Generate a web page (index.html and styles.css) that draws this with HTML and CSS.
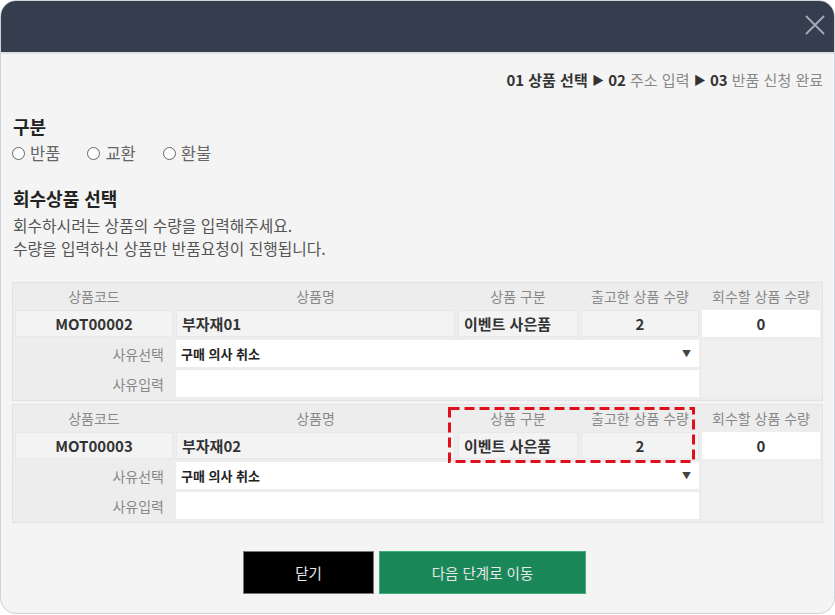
FILE: index.html
```html
<!DOCTYPE html>
<html lang="ko">
<head>
  <meta charset="UTF-8">
  <meta name="viewport" content="width=device-width, initial-scale=1.0">
  <title>반품 신청</title>
  <link rel="stylesheet" href="styles.css">
</head>
<body>
  <div class="modal">
    <div class="modal-head">
      <button class="close-btn" aria-label="닫기">
        <svg width="20" height="20" viewBox="0 0 20 20"><path d="M1 1 L19 19 M19 1 L1 19" stroke="#a3abb8" stroke-width="1.8" fill="none"/></svg>
      </button>
    </div>
    <div class="modal-body">
      <div class="steps">
        <b class="on">01 상품 선택</b> <i>▶</i> <b>02</b> <span>주소 입력</span> <i>▶</i> <b>03</b> <span>반품 신청 완료</span>
      </div>

      <h3 class="section-title">구분</h3>
      <div class="radios">
        <label><input type="radio" name="kind"> 반품</label>
        <label><input type="radio" name="kind"> 교환</label>
        <label><input type="radio" name="kind"> 환불</label>
      </div>

      <h3 class="section-title title-gap">회수상품 선택</h3>
      <p class="desc">회수하시려는 상품의 수량을 입력해주세요.<br>수량을 입력하신 상품만 반품요청이 진행됩니다.</p>

      <div class="item-table">
        <div class="th">상품코드</div>
        <div class="th">상품명</div>
        <div class="th">상품 구분</div>
        <div class="th">출고한 상품 수량</div>
        <div class="th">회수할 상품 수량</div>
        <div class="td center">MOT00002</div>
        <div class="td">부자재01</div>
        <div class="td">이벤트 사은품</div>
        <div class="td center">2</div>
        <div class="td input center">0</div>
        <div class="lbl">사유선택</div>
        <div class="select">구매 의사 취소<span class="arrow">▼</span></div>
        <div class="blank"></div>
        <div class="lbl">사유입력</div>
        <div class="text-input"></div>
      </div>

      <div class="item-table">
        <div class="th">상품코드</div>
        <div class="th">상품명</div>
        <div class="th">상품 구분</div>
        <div class="th">출고한 상품 수량</div>
        <div class="th">회수할 상품 수량</div>
        <div class="td center">MOT00003</div>
        <div class="td">부자재02</div>
        <div class="td">이벤트 사은품</div>
        <div class="td center">2</div>
        <div class="td input center">0</div>
        <div class="lbl">사유선택</div>
        <div class="select">구매 의사 취소<span class="arrow">▼</span></div>
        <div class="blank"></div>
        <div class="lbl">사유입력</div>
        <div class="text-input"></div>
        <svg class="highlight" width="247" height="56" viewBox="0 0 247 56">
          <rect x="1.5" y="1.5" width="244" height="53" fill="none" stroke="#e0101a" stroke-width="3" stroke-dasharray="10 5"/>
        </svg>
      </div>

      <div class="actions">
        <button class="btn btn-close">닫기</button>
        <button class="btn btn-next">다음 단계로 이동</button>
      </div>
    </div>
  </div>
</body>
</html>
```

FILE: styles.css
```css
* { box-sizing: border-box; }
body {
  margin: 0;
  background: #fff;
  font-family: "Noto Sans CJK KR", "Noto Sans", sans-serif;
  color: #333;
}
.modal {
  height: 614px;
  border: 1px solid #cfd2d6;
  border-radius: 16px;
  overflow: hidden;
  background: #f4f4f4;
}
.modal-head {
  height: 53px;
  background: #353e4f;
  border-bottom: 2px solid #dde1e7;
  display: flex;
  justify-content: flex-end;
  align-items: center;
  padding-right: 5px;
}
.close-btn {
  background: none;
  border: none;
  padding: 0;
  width: 28px;
  height: 28px;
  display: flex;
  align-items: center;
  justify-content: center;
  margin-bottom: 4px;
  cursor: pointer;
}
.modal-body {
  padding: 0 11px;
}
.steps {
  margin-top: 16px;
  text-align: right;
  font-size: 15px;
  line-height: 20px;
  color: #888;
}
.steps b { color: #333; font-weight: bold; }
.steps i {
  font-style: normal;
  font-size: 12px;
  color: #333;
  vertical-align: 1px;
}
.section-title {
  margin: 24px 0 0 1px;
  font-size: 18px;
  line-height: 24px;
  font-weight: bold;
  color: #222;
}
.title-gap { margin-top: 22px; }
.radios {
  margin-top: 4px;
  display: flex;
  gap: 27px;
  font-size: 16.5px;
  line-height: 22px;
  color: #666;
}
.radios label {
  display: flex;
  align-items: center;
  gap: 5px;
}
.radios input {
  appearance: none;
  margin: 0;
  width: 13px;
  height: 13px;
  border: 1.5px solid #666;
  border-radius: 50%;
  background: #fff;
}
.desc {
  margin: 4px 0 0 1px;
  font-size: 15.8px;
  line-height: 23px;
  color: #555;
}
.item-table {
  position: relative;
  margin-top: 22px;
  border: 1px solid #e3e3e3;
  background: #ededed;
  display: grid;
  grid-template-columns: 158px 279px 120px 118px 118px;
  grid-template-rows: 23px 27px 27px 27px;
  gap: 3px;
  padding: 1px 2px 3px 2px;
  font-size: 14px;
}
.item-table + .item-table { margin-top: 3px; }
.th {
  display: flex;
  align-items: center;
  justify-content: center;
  color: #888;
}
.td {
  display: flex;
  align-items: center;
  padding: 0 5px;
  background: #f3f3f3;
  border: 1px solid #e8e8e8;
  font-size: 15px;
  font-weight: bold;
  color: #333;
}
.td.center { justify-content: center; }
.td.input { background: #fff; border-color: #fff; }
.lbl {
  display: flex;
  align-items: center;
  justify-content: flex-end;
  padding-right: 9px;
  color: #888;
}
.select {
  grid-column: 2 / 5;
  display: flex;
  align-items: center;
  padding: 0 5px;
  background: #fff;
  font-size: 13px;
  font-weight: bold;
  color: #222;
}
.select .arrow {
  margin-left: auto;
  margin-right: 3px;
  font-size: 9px;
  color: #444;
}
.blank {
  grid-column: 5;
  grid-row: 3 / 5;
  background: #f0f0f0;
}
.text-input {
  grid-column: 2 / 5;
  background: #fff;
}
.highlight {
  position: absolute;
  left: 435px;
  top: 2px;
  pointer-events: none;
}
.actions {
  margin-top: 28px;
  display: flex;
  justify-content: center;
  gap: 5px;
  padding-right: 6px;
}
.btn {
  height: 43px;
  font-family: inherit;
  font-size: 14.5px;
  color: #e8e8e8;
  cursor: pointer;
}
.btn-close {
  width: 131px;
  background: #000;
  border: 1px solid #777;
}
.btn-next {
  width: 207px;
  background: #1a8758;
  border: 1px solid #3fae7b;
}
```
